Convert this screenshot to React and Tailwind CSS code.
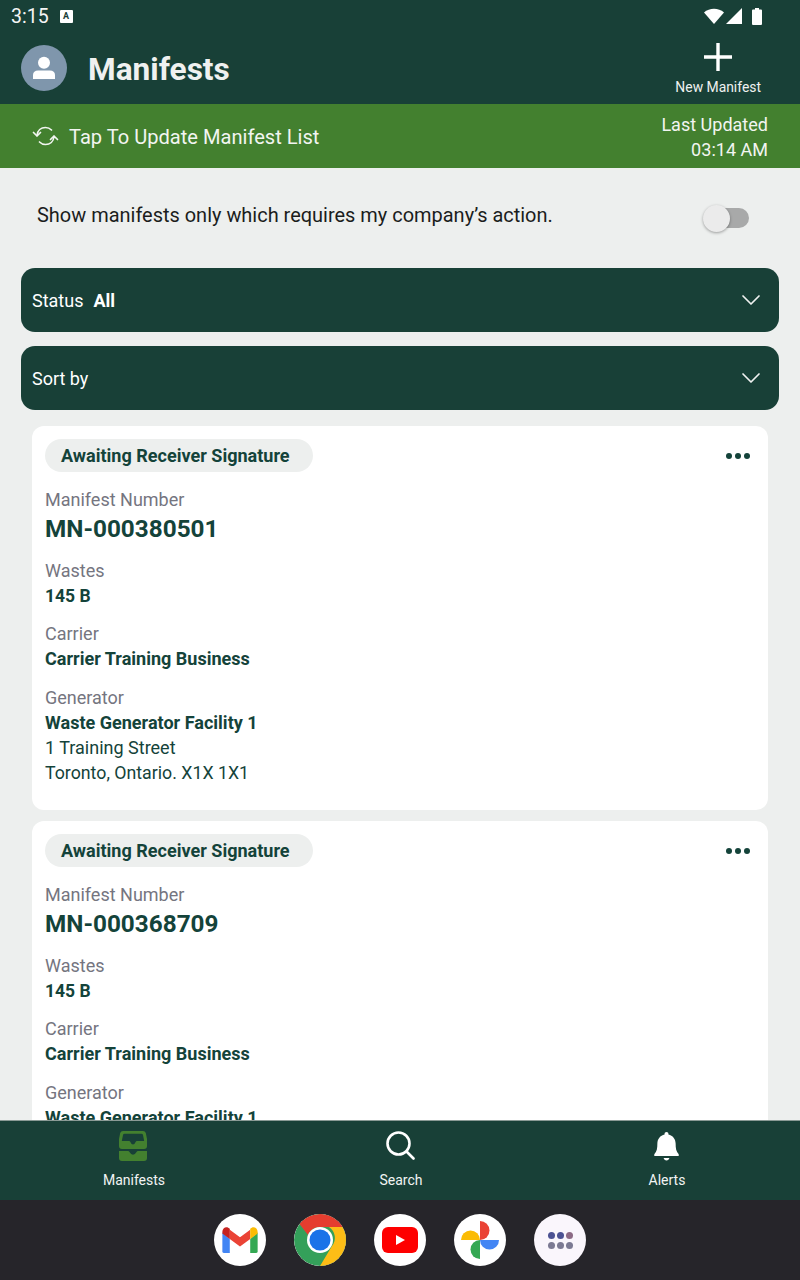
import React from "react";

const Chevron = () => (
  <svg width="20" height="12" viewBox="0 0 20 12" fill="none" stroke="#f0f2f1" strokeWidth="1.7" strokeLinecap="round" strokeLinejoin="round" className="-mr-px">
    <path d="M2 2l8 8 8-8" />
  </svg>
);

function Dropdown({ children }) {
  return (
    <div className="h-16 rounded-[14px] bg-[#184037] flex items-center justify-between pl-[11px] pr-[19px] text-white text-[18px]">
      <div className="flex gap-[10px]">{children}</div>
      <Chevron />
    </div>
  );
}

function Label({ children, className = "" }) {
  return <div className={`text-[18px] leading-[20px] text-[#75757f] ${className}`}>{children}</div>;
}

function Card({ number, clipped }) {
  return (
    <div className={`mx-8 bg-white rounded-[12px] pl-[13px] pr-[16px] pt-[13px] ${clipped ? "" : "h-[384px] mb-[11px]"} shrink-0`}>
      <div className="flex items-center justify-between">
        <div className="h-[33px] rounded-full bg-[#edefee] w-[268px] pl-4 flex items-center text-[#14433a] text-[18.05px] font-bold whitespace-nowrap">
          Awaiting Receiver Signature
        </div>
        <div className="flex gap-[3px] mr-[2px]">
          <span className="w-[6px] h-[6px] rounded-full bg-[#14433a]" />
          <span className="w-[6px] h-[6px] rounded-full bg-[#14433a]" />
          <span className="w-[6px] h-[6px] rounded-full bg-[#14433a]" />
        </div>
      </div>
      <Label className="mt-[18px]">Manifest Number</Label>
      <div className="text-[24.3px] leading-[28px] font-bold text-[#14433a] mt-[5px]">{number}</div>
      <Label className="mt-[18px]">Wastes</Label>
      <div className="text-[17.5px] leading-[20px] font-bold text-[#14433a] mt-[5px]">145 B</div>
      <Label className="mt-[18px]">Carrier</Label>
      <div className="text-[18.05px] leading-[20px] font-bold text-[#14433a] mt-[5px]">Carrier Training Business</div>
      <Label className="mt-[19px]">Generator</Label>
      <div className="text-[18.05px] leading-[20px] font-bold text-[#14433a] mt-[5px]">Waste Generator Facility 1</div>
      <div className="text-[18px] leading-[25px] text-[#14433a] mt-[2px]">1 Training Street</div>
      <div className="text-[17.75px] leading-[25px] text-[#14433a] mt-[1px]">Toronto, Ontario. X1X 1X1</div>
    </div>
  );
}

function NavItem({ icon, label, className = "" }) {
  return (
    <div className={`flex flex-col items-center justify-start ${className}`}>
      <div className="h-[51px] flex items-center justify-center">{icon}</div>
      <div className="text-[14px] leading-[16px] text-[#f2f4f3]">{label}</div>
    </div>
  );
}

function DockIcon({ children, bg = "bg-white" }) {
  return <div className={`w-[52px] h-[52px] rounded-full ${bg} flex items-center justify-center overflow-hidden`}>{children}</div>;
}

export default function App() {
  return (
    <div className="w-[800px] h-[1280px] flex flex-col overflow-hidden bg-[#edefee]" style={{ fontFamily: "Roboto, sans-serif" }}>
      {/* Status + header */}
      <div className="h-[104px] bg-[#184037] shrink-0 flex flex-col">
        <div className="h-[32px] flex items-center justify-between pl-[11px] pr-[38px] text-white">
          <div className="flex items-center gap-[11px]">
            <span className="text-[19.5px] leading-none text-[#f5f5f5] mt-[1px]">3:15</span>
            <span className="w-[13px] h-[13px] bg-white rounded-[1px] flex items-center justify-center text-[9px] font-bold text-[#184037] leading-none">A</span>
          </div>
          <div className="flex items-center">
            <svg width="20" height="16" viewBox="0 0 20 16"><path d="M0 4.500C5.500-.5 14.500-.5 20 4.500L10 16Z" fill="#fff" /></svg>
            <svg width="16" height="16" viewBox="0 0 16 16" className="ml-[2px]"><path d="M16 0V16H0Z" fill="#fff" /></svg>
            <svg width="10" height="17" viewBox="0 0 10 17" className="ml-[10px]"><path d="M3 0h4v1.500h2a1 1 0 0 1 1 1V16a1 1 0 0 1-1 1H1a1 1 0 0 1-1-1V2.500a1 1 0 0 1 1-1h2Z" fill="#fff" /></svg>
          </div>
        </div>
        <div className="flex-1 flex items-start justify-between pl-[21px] pr-[39px]">
          <div className="flex items-center mt-[13px]">
            <div className="w-[46px] h-[46px] rounded-full bg-[#7f96ac] flex items-center justify-center">
              <svg width="24" height="24" viewBox="0 0 24 24" fill="#fff">
                <circle cx="12" cy="6.700" r="6" />
                <path d="M1 23v-4c0-2.800 2-4.500 5-4.500h12c3 0 5 1.700 5 4.500v4Z" />
              </svg>
            </div>
            <div className="ml-[21px] text-[31.6px] leading-none font-bold text-[#eff1f0] mt-[3px]">Manifests</div>
          </div>
          <div className="flex flex-col items-center">
            <svg width="28" height="28" viewBox="0 0 28 28" className="mt-[11px]" fill="#fff">
              <path d="M12.300 0h3.400v12.300H28v3.400H15.700V28h-3.400V15.700H0v-3.400h12.300Z" />
            </svg>
            <div className="text-[13.9px] leading-[16px] text-[#eff1f0] mt-[8px]">New Manifest</div>
          </div>
        </div>
      </div>

      {/* Update bar */}
      <div className="h-16 bg-[#43802f] shrink-0 flex items-center justify-between px-[32px] text-[#f2f5f1]">
        <div className="flex items-center">
          <svg width="27" height="24" viewBox="0 0 27 24" fill="none" stroke="#f2f5f1" strokeWidth="1.700" strokeLinecap="round" strokeLinejoin="round">
            <path d="M5 11.500C5.500 6.500 9 3.500 13.500 3.500c2.500 0 4.500 1 6 2.500" />
            <path d="M1.500 8.500L5 12l3.500-3.500" />
            <path d="M22 12.500c-.5 5-4 8-8.500 8-2.500 0-4.500-1-6-2.500" />
            <path d="M18.500 15.500L22 12l3.500 3.500" />
          </svg>
          <span className="ml-[10px] text-[20.1px] leading-none mt-[2px]">Tap To Update Manifest List</span>
        </div>
        <div className="text-right text-[18.05px] leading-[25px] pt-[1px]">
          <div>Last Updated</div>
          <div>03:14 AM</div>
        </div>
      </div>

      {/* Toggle row */}
      <div className="h-[100px] shrink-0 flex items-start justify-between pl-[37px] pr-[51px]">
        <div className="text-[19.97px] leading-none text-[#1b1d1c] mt-[38px]">Show manifests only which requires my company’s action.</div>
        <div className="relative w-[46px] h-[20px] mt-[40px]">
          <div className="absolute left-[6px] top-0 w-[40px] h-[20px] rounded-full bg-[#a8a9a9]" />
          <div className="absolute left-0 top-[-3px] w-[27px] h-[27px] rounded-full bg-[#ebebeb] shadow-[0_1px_3px_rgba(0,0,0,0.35)]" />
        </div>
      </div>

      {/* Dropdowns */}
      <div className="px-[21px] flex flex-col gap-[14px] shrink-0">
        <Dropdown>
          <span>Status</span>
          <span className="font-bold">All</span>
        </Dropdown>
        <Dropdown>
          <span>Sort by</span>
        </Dropdown>
      </div>

      {/* Cards */}
      <div className="flex-1 min-h-0 overflow-hidden pt-4">
        <Card number="MN-000380501" />
        <Card number="MN-000368709" clipped />
      </div>

      {/* Bottom nav */}
      <div className="h-[80px] shrink-0 bg-[#184037] border-t border-t-[#8a9a95] flex items-start pl-[74px]">
        <NavItem
          className="w-[120px]"
          label="Manifests"
          icon={
            <svg width="28" height="30" viewBox="0 0 28 30" fill="#43802f" className="-mt-[2px] mr-[2px]">
              <path fillRule="evenodd" d="M4 0H24a3 3 0 0 1 2.800 2L28 8V15a3 3 0 0 1-3 3H3a3 3 0 0 1-3-3V8L1.200 2A3 3 0 0 1 4 0ZM5.500 2.700H22.500Q23.700 2.700 24 4L25.200 10H18Q17 10 16.600 11Q15.500 13.500 14 13.500Q12.500 13.500 11.400 11Q11 10 10 10H2.800L4 4Q4.300 2.700 5.500 2.700Z" />
              <path d="M0 20H9Q10 20 10.500 21Q12 23.700 14 23.700Q16 23.700 17.500 21Q18 20 19 20H28V27a3 3 0 0 1-3 3H3a3 3 0 0 1-3-3Z" />
            </svg>
          }
        />
        <NavItem
          className="w-[120px] ml-[147px]"
          label="Search"
          icon={
            <svg width="29" height="29" viewBox="0 0 29 29" fill="none" stroke="#fff" strokeWidth="2.600" strokeLinecap="round" className="-mt-[2px] mr-[2px]">
              <circle cx="12.500" cy="12.500" r="11" />
              <path d="M20.500 20.500L27.500 27.500" />
            </svg>
          }
        />
        <NavItem
          className="w-[120px] ml-[146px]"
          label="Alerts"
          icon={
            <svg width="25" height="29" viewBox="0 0 26 30" fill="#fff" className="-mt-[1px] mr-[2px]">
              <path d="M13 0c1.200 0 2 .8 2 1.900v.6c4.500 1 7.500 4.600 7.500 9.500 0 5 .5 8.500 3.200 11v2H.3v-2C3 20.500 3.500 17 3.500 12c0-4.900 3-8.500 7.500-9.500v-.6C11 .8 11.800 0 13 0Z" />
              <path d="M10 27h6c-.3 1.500-1.500 2.500-3 2.500s-2.700-1-3-2.500Z" />
            </svg>
          }
        />
      </div>

      {/* Dock */}
      <div className="h-[80px] shrink-0 bg-[#26252a] flex items-center justify-center gap-[28px]">
        <DockIcon>
          <svg width="36" height="26" viewBox="0 0 38 28">
            <path d="M0 6v20a2 2 0 0 0 2 2h6V13Z" fill="#4285f4" />
            <path d="M30 13v15h6a2 2 0 0 0 2-2V6Z" fill="#34a853" />
            <path d="M8 13L19 21l11-8V3L19 11 8 3Z" fill="#ea4335" />
            <path d="M0 5.500c0-5 5-7 8-3.500v11L0 7Z" fill="#c5221f" />
            <path d="M38 5.500c0-5-5-7-8-3.500v11l8-6Z" fill="#fbbc04" />
          </svg>
        </DockIcon>
        <DockIcon>
          <svg width="52" height="52" viewBox="0 0 52 52">
            <circle cx="26" cy="26" r="26" fill="#34a05a" />
            <path d="M26 0a26 26 0 0 1 23.800 13H26a13 13 0 0 0-12 8L5.500 10A26 26 0 0 1 26 0Z" fill="#e53d2f" />
            <path d="M49.800 13A26 26 0 0 1 26 52l12-20a13 13 0 0 0-3-19Z" fill="#fdbd16" />
            <circle cx="26" cy="26" r="13" fill="#fff" />
            <circle cx="26" cy="26" r="10.500" fill="#1a73e8" />
          </svg>
        </DockIcon>
        <DockIcon>
          <svg width="36" height="26" viewBox="0 0 36 26">
            <rect width="36" height="26" rx="6" fill="#fe0000" />
            <path d="M14 8v10l9-5Z" fill="#fff" />
          </svg>
        </DockIcon>
        <DockIcon>
          <svg width="38" height="38" viewBox="0 0 38 38">
            <path d="M19 0a9.500 9.500 0 0 1 0 19Z" fill="#ea4335" />
            <path d="M38 19a9.500 9.500 0 0 1-19 0Z" fill="#4285f4" />
            <path d="M19 38a9.500 9.500 0 0 1 0-19Z" fill="#34a853" />
            <path d="M0 19a9.500 9.500 0 0 1 19 0Z" fill="#fbbc04" />
          </svg>
        </DockIcon>
        <DockIcon bg="bg-[#faf6fc]">
          <div className="grid grid-cols-3 gap-x-[2px] gap-y-[3px]">
            <span className="w-[7px] h-[7px] rounded-full bg-[#4c5293]" />
            <span className="w-[7px] h-[7px] rounded-full bg-[#4c5293]" />
            <span className="w-[7px] h-[7px] rounded-full bg-[#8c6a85]" />
            <span className="w-[7px] h-[7px] rounded-full bg-[#7c7a93]" />
            <span className="w-[7px] h-[7px] rounded-full bg-[#7c7a93]" />
            <span className="w-[7px] h-[7px] rounded-full bg-[#7c7a93]" />
          </div>
        </DockIcon>
      </div>
    </div>
  );
}
